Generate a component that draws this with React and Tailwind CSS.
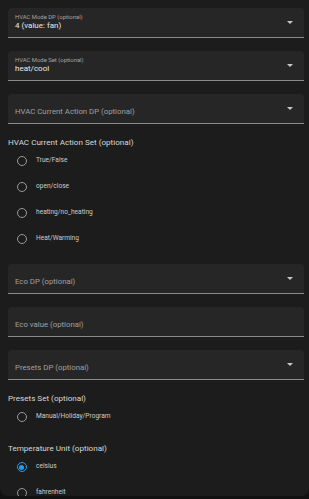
const FONT = { fontFamily: 'Roboto, "Noto Sans", sans-serif' }

function Arrow() {
  return (
    <svg className="w-[6px] h-[3px] shrink-0" viewBox="0 0 6 3">
      <path d="M0 0h6L3 3z" fill="#c8c8c8" />
    </svg>
  )
}

function Field({ label, value, placeholder, select = true }) {
  return (
    <div className="h-[30px] bg-[#262626] rounded-t-[4px] border-b border-[#8a8a8a] flex items-center pl-[7px] pr-[11px]">
      <div className="flex-1 min-w-0">
        {label ? (
          <div className="flex flex-col">
            <span className="text-[5.9px] leading-[7px] text-[#a4a4a4]">{label}</span>
            <span className="text-[8px] leading-[10px] text-[#e8e8e8]">{value}</span>
          </div>
        ) : (
          <span className="text-[7.8px] leading-[10px] text-[#a0a0a0]">{placeholder}</span>
        )}
      </div>
      {select && <Arrow />}
    </div>
  )
}

function Radio({ label, checked }) {
  return (
    <div className="h-[26px] flex items-center">
      <div className="w-[26px] flex justify-center pl-[1px]">
        {checked ? (
          <div className="w-[10px] h-[10px] rounded-full border-[1.5px] border-[#1e9cf0] flex items-center justify-center">
            <div className="w-[5px] h-[5px] rounded-full bg-[#1e9cf0]" />
          </div>
        ) : (
          <div className="w-[10px] h-[10px] rounded-full border-[1.5px] border-[#9a9a9a]" />
        )}
      </div>
      <span className="ml-[2px] text-[6.6px] text-[#cccccc]">{label}</span>
    </div>
  )
}

function Heading({ children, className = '' }) {
  return (
    <div className={`h-[12px] flex items-center text-[8.1px] text-[#d8d8d8] ${className}`}>
      {children}
    </div>
  )
}

export default function App() {
  return (
    <div className="w-[309px] h-[499px] bg-[#111111] overflow-hidden" style={FONT}>
      <div className="h-[496px] bg-[#1c1c1c] rounded-b-[8px] overflow-hidden pt-[8px] pl-[8px] pr-[5px]">
        <div className="flex flex-col gap-[13px]">
          <Field label="HVAC Mode DP (optional)" value="4 (value: fan)" />
          <Field label="HVAC Mode Set (optional)" value="heat/cool" />
          <Field placeholder="HVAC Current Action DP (optional)" />
        </div>

        <Heading className="mt-[12px]">HVAC Current Action Set (optional)</Heading>
        <div>
          <Radio label="True/False" />
          <Radio label="open/close" />
          <Radio label="heating/no_heating" />
          <Radio label="Heat/Warming" />
        </div>

        <div className="flex flex-col gap-[13px] mt-[12px]">
          <Field placeholder="Eco DP (optional)" />
          <Field placeholder="Eco value (optional)" select={false} />
          <Field placeholder="Presets DP (optional)" />
        </div>

        <Heading className="mt-[12px]">Presets Set (optional)</Heading>
        <div>
          <Radio label="Manual/Holiday/Program" />
        </div>

        <Heading className="mt-[12px]">Temperature Unit (optional)</Heading>
        <div>
          <Radio label="celsius" checked />
          <Radio label="fahrenheit" />
        </div>
      </div>
    </div>
  )
}
